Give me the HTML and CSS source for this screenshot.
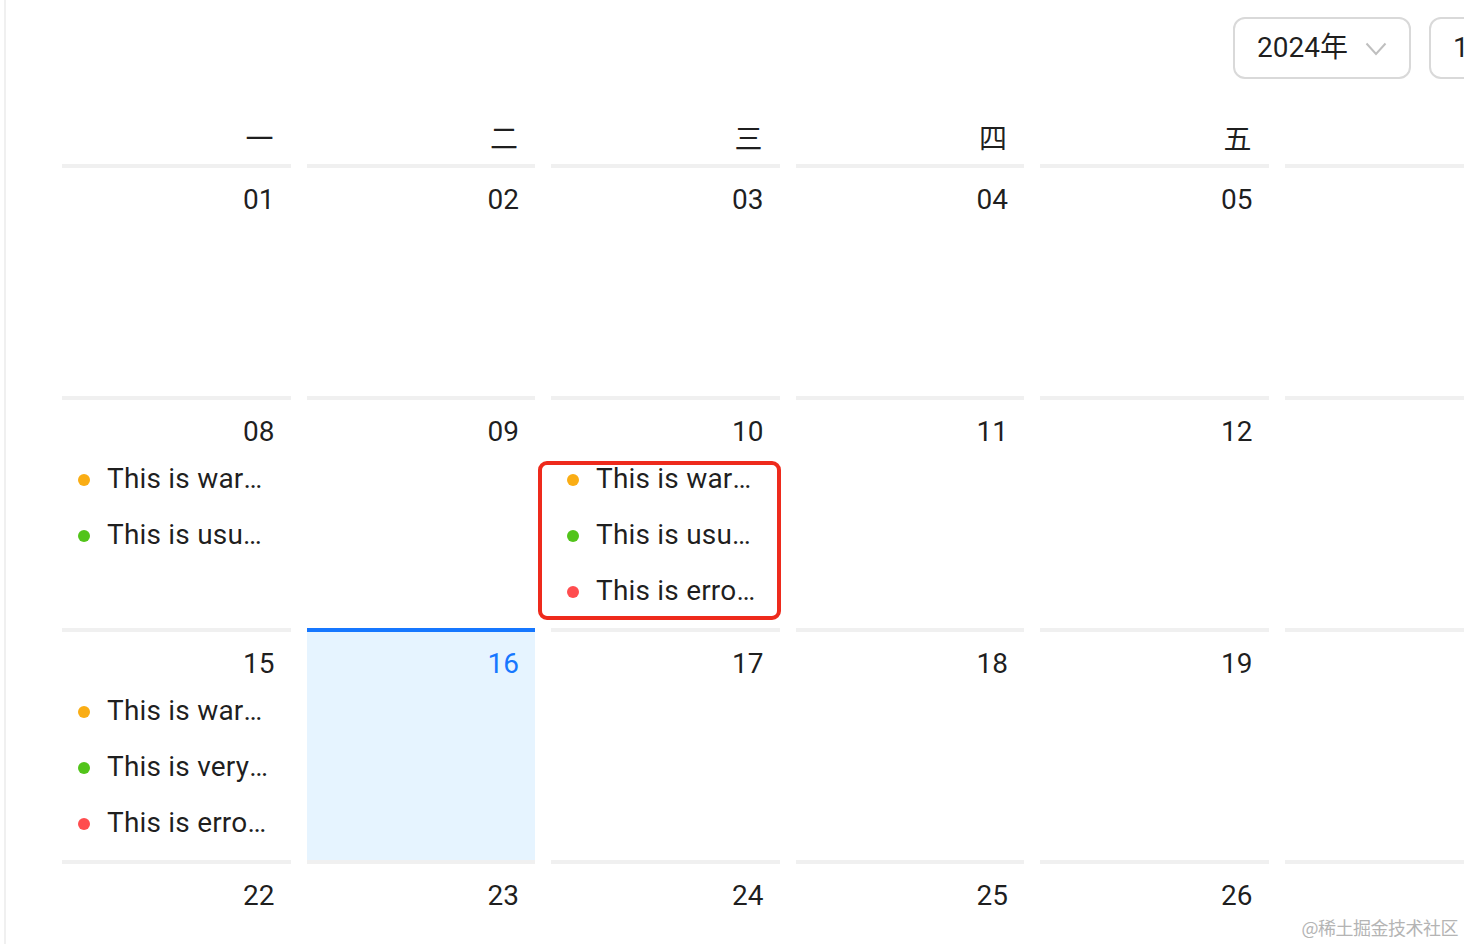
FILE: index.html
```html
<!DOCTYPE html>
<html lang="zh-CN">
<head>
<meta charset="utf-8">
<title>Calendar</title>
<link rel="stylesheet" href="styles.css">
</head>
<body>
<div class="page">
  <div class="calendar">
    <div class="header">
      <div class="select year">
        <span class="select-value">2024年</span>
        <svg class="chevron" width="22" height="14" viewBox="0 0 22 14"><polyline points="1.5,1.5 11,12 20.5,1.5" fill="none" stroke="#bfbfbf" stroke-width="2"/></svg>
      </div>
      <div class="select month">
        <span class="select-value">1月</span>
        <svg class="chevron" width="22" height="14" viewBox="0 0 22 14"><polyline points="1.5,1.5 11,12 20.5,1.5" fill="none" stroke="#bfbfbf" stroke-width="2"/></svg>
      </div>
    </div>

    <div class="weekdays">
      <div class="weekday">一</div>
      <div class="weekday">二</div>
      <div class="weekday">三</div>
      <div class="weekday">四</div>
      <div class="weekday">五</div>
      <div class="weekday">六</div>
      <div class="weekday">日</div>
    </div>

    <div class="grid">
      <div class="cell"><div class="value">01</div><div class="content"></div></div>
      <div class="cell"><div class="value">02</div><div class="content"></div></div>
      <div class="cell"><div class="value">03</div><div class="content"></div></div>
      <div class="cell"><div class="value">04</div><div class="content"></div></div>
      <div class="cell"><div class="value">05</div><div class="content"></div></div>
      <div class="cell"><div class="value">06</div><div class="content"></div></div>
      <div class="cell"><div class="value">07</div><div class="content"></div></div>

      <div class="cell"><div class="value">08</div><div class="content">
        <ul class="events">
          <li class="event"><span class="dot warning"></span><span class="event-text">This is warning event.</span></li>
          <li class="event"><span class="dot success"></span><span class="event-text">This is usual event.</span></li>
        </ul>
      </div></div>
      <div class="cell"><div class="value">09</div><div class="content"></div></div>
      <div class="cell"><div class="value">10</div><div class="content">
        <ul class="events">
          <li class="event"><span class="dot warning"></span><span class="event-text">This is warning event.</span></li>
          <li class="event"><span class="dot success"></span><span class="event-text">This is usual event.</span></li>
          <li class="event"><span class="dot error"></span><span class="event-text">This is error event.</span></li>
        </ul>
      </div></div>
      <div class="cell"><div class="value">11</div><div class="content"></div></div>
      <div class="cell"><div class="value">12</div><div class="content"></div></div>
      <div class="cell"><div class="value">13</div><div class="content"></div></div>
      <div class="cell"><div class="value">14</div><div class="content"></div></div>

      <div class="cell"><div class="value">15</div><div class="content">
        <ul class="events">
          <li class="event"><span class="dot warning"></span><span class="event-text">This is warning event</span></li>
          <li class="event"><span class="dot success"></span><span class="event-text">This is very long usual event......</span></li>
          <li class="event"><span class="dot error"></span><span class="event-text">This is error event 1.</span></li>
        </ul>
      </div></div>
      <div class="cell today"><div class="value">16</div><div class="content"></div></div>
      <div class="cell"><div class="value">17</div><div class="content"></div></div>
      <div class="cell"><div class="value">18</div><div class="content"></div></div>
      <div class="cell"><div class="value">19</div><div class="content"></div></div>
      <div class="cell"><div class="value">20</div><div class="content"></div></div>
      <div class="cell"><div class="value">21</div><div class="content"></div></div>

      <div class="cell"><div class="value">22</div><div class="content"></div></div>
      <div class="cell"><div class="value">23</div><div class="content"></div></div>
      <div class="cell"><div class="value">24</div><div class="content"></div></div>
      <div class="cell"><div class="value">25</div><div class="content"></div></div>
      <div class="cell"><div class="value">26</div><div class="content"></div></div>
      <div class="cell"><div class="value">27</div><div class="content"></div></div>
      <div class="cell"><div class="value">28</div><div class="content"></div></div>
    </div>
  </div>

  <div class="highlight"></div>
  <div class="watermark">@稀土掘金技术社区</div>
</div>
</body>
</html>
```
FILE: styles.css
```css
html, body {
  margin: 0;
  padding: 0;
  background: #ffffff;
  overflow: hidden;
}

body {
  width: 1464px;
  height: 944px;
  font-family: Roboto, "Noto Sans CJK SC", sans-serif;
  color: rgba(0, 0, 0, 0.88);
}

.page {
  position: relative;
  width: 1464px;
  height: 944px;
  overflow: hidden;
}

.calendar {
  margin-left: 4px;
  border-left: 2px solid #f0f0f0;
  height: 944px;
  padding-left: 48px;
  padding-top: 17px;
  width: 1712px;
  box-sizing: content-box;
}

/* header */
.header {
  display: flex;
  gap: 18px;
  padding-left: 1179px;
  height: 62px;
}

.select {
  box-sizing: border-box;
  height: 62px;
  border: 2px solid #d9d9d9;
  border-radius: 12px;
  display: flex;
  align-items: center;
  padding: 0 22px 0 22px;
  gap: 14px;
  flex-shrink: 0;
  background: #fff;
  white-space: nowrap;
}

.select.year {
  width: 178px;
}

.select.month {
  width: 140px;
}

.select-value {
  font-size: 28px;
  line-height: 36px;
  font-family: Roboto, "Noto Sans CJK SC", sans-serif;
  color: rgba(0, 0, 0, 0.88);
  flex: 1;
  white-space: nowrap;
}

.chevron {
  flex-shrink: 0;
  margin-top: 1px;
}

/* week header */
.weekdays {
  display: grid;
  grid-template-columns: repeat(7, 244.5px);
  margin-top: 39px;
}

.weekday {
  margin: 0 8px;
  padding: 0 17px 10px 0;
  height: 36px;
  line-height: 38px;
  text-align: right;
  font-size: 28px;
  font-family: "Noto Sans CJK SC", sans-serif;
  color: rgba(0, 0, 0, 0.88);
}

/* date grid */
.grid {
  display: grid;
  grid-template-columns: repeat(7, 244.5px);
}

.cell {
  margin: 0 8px;
  border-top: 4px solid #f0f0f0;
  padding: 8px 16px 0;
  box-sizing: border-box;
  height: 232px;
}

.cell.today {
  background: #e6f4ff;
  border-top-color: #1677ff;
}

.value {
  text-align: right;
  font-size: 28px;
  line-height: 48px;
  height: 48px;
}

.cell.today .value {
  color: #1677ff;
}

.content {
  height: 172px;
  overflow: hidden;
}

/* events */
.events {
  list-style: none;
  margin: 0;
  padding: 0;
}

.event {
  display: flex;
  align-items: center;
  height: 46px;
  margin-bottom: 10px;
  font-size: 28px;
  white-space: nowrap;
}

.dot {
  width: 12px;
  height: 12px;
  border-radius: 50%;
  flex-shrink: 0;
  margin-right: 17px;
  margin-top: 2px;
}

.dot.warning { background: #faad14; }
.dot.success { background: #52c41a; }
.dot.error { background: #ff4d4f; }

.event-text {
  overflow: hidden;
  text-overflow: ellipsis;
  white-space: nowrap;
  min-width: 0;
  flex: 1;
  line-height: 46px;
  letter-spacing: 0.2px;
}

/* overlays */
.highlight {
  position: absolute;
  left: 538px;
  top: 461px;
  width: 243px;
  height: 159px;
  box-sizing: border-box;
  border: 4px solid #ee2a1c;
  border-radius: 9px;
}

.watermark {
  position: absolute;
  right: 6px;
  bottom: 6px;
  font-size: 18px;
  line-height: 22px;
  color: #b4b4b4;
  font-family: "Noto Sans CJK SC", sans-serif;
  letter-spacing: -0.5px;
}
```
